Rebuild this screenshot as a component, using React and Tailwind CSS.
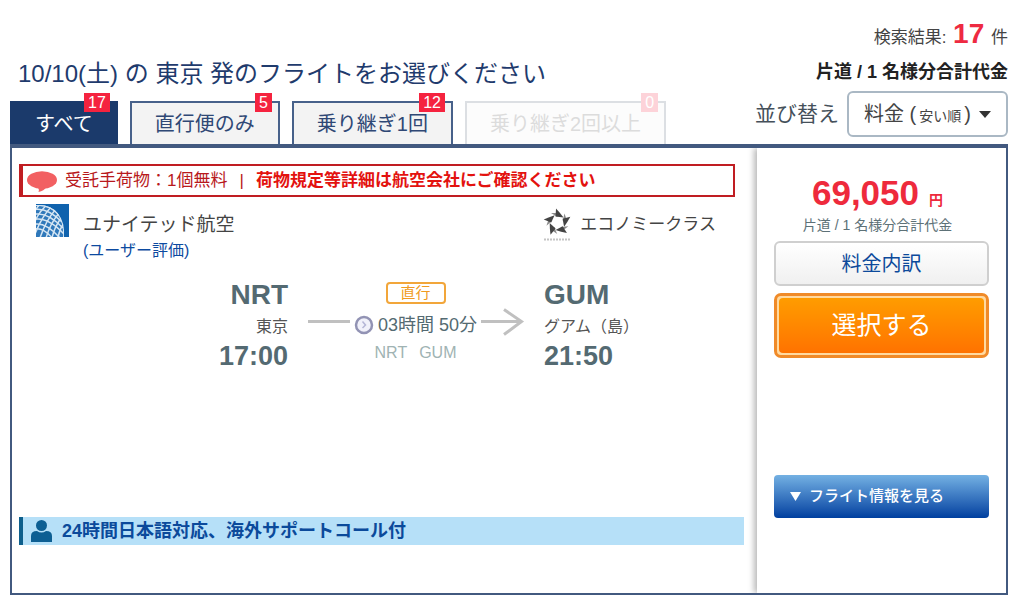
const tabs = [
  { label: 'すべて', count: 17, state: 'active' },
  { label: '直行便のみ', count: 5, state: 'normal' },
  { label: '乗り継ぎ1回', count: 12, state: 'normal' },
  { label: '乗り継ぎ2回以上', count: 0, state: 'disabled' },
];

const tabStyles = {
  active: 'border-[#1b3a6b] bg-[#1b3a6b] text-white',
  normal: 'border-[#47618a] bg-[#f3f3f3] text-[#2f4875]',
  disabled: 'border-[#dcdfe3] bg-[#fcfcfc] text-[#dcdcdc]',
};

function Tab({ label, count, state }) {
  return (
    <button
      type="button"
      role="tab"
      aria-selected={state === 'active'}
      disabled={state === 'disabled'}
      className={`relative h-[43px] border-2 border-b-0 px-[23px] text-[20px] leading-[40px] whitespace-nowrap ${tabStyles[state]}`}
    >
      {label}
      <span
        className={`absolute -top-[10px] right-[6px] px-[4px] text-[16px] leading-[19px] ${
          state === 'disabled' ? 'bg-[#fdd3d9] text-white' : 'bg-[#f5233f] text-white'
        }`}
      >
        {count}
      </span>
    </button>
  );
}

function SpeechBubble() {
  return (
    <svg width="30" height="22" viewBox="0 0 30 22" aria-hidden="true">
      <ellipse cx="15" cy="10" rx="15" ry="8.800" fill="#f26062" />
      <path d="M9 17 Q13 18 11.500 22 Q17 21 19.500 17 Z" fill="#f26062" />
    </svg>
  );
}

function AirlineLogo() {
  return (
    <svg width="33" height="33" viewBox="0 0 33 33" aria-hidden="true">
      <defs>
        <clipPath id="globe">
          <path d="M0 1 Q14 0 21.500 9 Q29 18 28 33 H0 Z" />
        </clipPath>
      </defs>
      <rect width="33" height="33" fill="#0f62ad" />
      <g clipPath="url(#globe)" fill="none" stroke="#d4e5f3" strokeWidth="1.500">
        <rect width="33" height="33" fill="#2f78ba" stroke="none" />
        <path d="M-4 6 Q10 2 26 18 M-4 11 Q10 6 27 24 M-4 16 Q10 11 28 30 M-4 21 Q8 16 24 34 M-4 26 Q6 21 18 36 M-4 2 Q12 -2 24 12" />
        <path d="M6 -2 Q-2 6 -4 14 M12 0 Q2 8 -3 22 M16 2 Q6 12 -1 30 M20 5 Q10 16 4 34 M23 9 Q14 20 10 34 M25 14 Q18 24 16 34 M28 19 Q23 26 22 34" />
        <path d="M0 1 Q14 0 21.500 9 Q29 18 28 33" strokeWidth="2" />
      </g>
    </svg>
  );
}

function AllianceLogo() {
  return (
    <svg width="30" height="36" viewBox="0 0 30 36" aria-hidden="true">
      <g transform="translate(14.500 15.500)">
        {[0, 72, 144, 216, 288].map((angle) => (
          <g key={angle} transform={`rotate(${angle})`}>
            <path d="M-6.500 -9.500 L0 -9.500 L0 -5.500 Z" fill="#8a8a8a" />
            <path d="M-1.500 -14 L2.500 -9.500 L6 -5 L-2 -6 Z" fill="#444" />
          </g>
        ))}
      </g>
      <path d="M1 32.500 H28" stroke="#c4c4c4" strokeWidth="2" strokeDasharray="2 1" />
    </svg>
  );
}

function ClockIcon() {
  return (
    <svg width="20" height="20" viewBox="0 0 20 20" aria-hidden="true">
      <circle cx="10" cy="10" r="8" fill="#f1f1fa" stroke="#9293b4" strokeWidth="2.500" />
      <path d="M8.500 6.500 L11.500 10 L8.500 13" fill="none" stroke="#b5b6d6" strokeWidth="1.500" />
    </svg>
  );
}

function PersonIcon() {
  return (
    <svg width="21" height="23" viewBox="0 0 21 23" aria-hidden="true" fill="#0d5f93">
      <ellipse cx="10.500" cy="5.500" rx="5.500" ry="5.500" />
      <path d="M0 22 V16 Q0 11 6 11 Q10.500 14 15 11 Q21 11 21 16 V22 Z" />
    </svg>
  );
}

function Header() {
  return (
    <header className="flex items-end justify-between">
      <div>
        <h1 className="mb-[10px] ml-2 text-[24px] leading-[34px] text-[#1f3b6d]">
          10/10(土) の 東京 発のフライトをお選びください
        </h1>
        <div role="tablist" className="flex gap-3">
          {tabs.map((tab) => (
            <Tab key={tab.label} {...tab} />
          ))}
        </div>
      </div>
      <div className="flex flex-col items-end pb-[7px]">
        <p className="text-[17px] leading-[36px]">
          検索結果: <strong className="mx-[2px] text-[28px] text-[#ee2a41]">17</strong> 件
        </p>
        <p className="text-[18px] leading-[32px] font-bold text-[#222]">片道 / 1 名様分合計代金</p>
        <div className="mt-[3px] flex items-center gap-2">
          <label htmlFor="sort" className="text-[21px] text-[#45505a]">
            並び替え
          </label>
          <div className="grid w-[161px] items-center">
            <select
              id="sort"
              className="col-start-1 row-start-1 h-[46px] w-full appearance-none rounded-[6px] border-2 border-[#aab8c4] bg-white px-4 text-[14px] text-transparent"
            >
              <option className="text-black">料金 ( 安い順 )</option>
            </select>
            <span
              aria-hidden="true"
              className="pointer-events-none col-start-1 row-start-1 flex items-center justify-between px-[17px] text-[20px]"
            >
              <span className="whitespace-nowrap">
                料金 (<span className="mx-[3px] text-[14px]">安い順</span>)
              </span>
              <svg width="12" height="7" viewBox="0 0 12 7" fill="#333">
                <path d="M0 0 H12 L6 7 Z" />
              </svg>
            </span>
          </div>
        </div>
      </div>
    </header>
  );
}

function Route() {
  return (
    <div className="mt-4 flex text-[#546a72]">
      <div className="w-[269px] text-right">
        <p className="text-[28px] leading-[32px] font-bold">NRT</p>
        <p className="text-[16px] leading-[32px] text-[#555]">東京</p>
        <p className="text-[27px] leading-[26px] font-bold">17:00</p>
      </div>
      <div className="ml-5 flex flex-col items-center">
        <span className="mt-[3px] rounded-[4px] border-2 border-[#f2a63a] px-[13px] text-[15px] leading-[18px] text-[#f09a20]">
          直行
        </span>
        <div className="mt-[7px] flex items-center">
          <svg width="42" height="28" viewBox="0 0 42 28" aria-hidden="true">
            <path d="M0 10.500 H42" stroke="#c0c0c0" strokeWidth="3" />
          </svg>
          <span className="mx-[4px] flex items-center gap-1 text-[18px] leading-[28px] whitespace-nowrap">
            <ClockIcon />
            03時間 50分
          </span>
          <svg
            width="42"
            height="28"
            viewBox="0 0 42 28"
            aria-hidden="true"
            fill="none"
            stroke="#c0c0c0"
            strokeWidth="3"
            className="overflow-visible"
          >
            <path d="M0 10.500 H41 M23 -1.500 L40.500 10.500 L23 23.500" />
          </svg>
        </div>
        <p className="flex gap-3 text-[16px] leading-[28px] text-[#a0b3b3]">
          <span>NRT</span>
          <span>GUM</span>
        </p>
      </div>
      <div className="ml-[21px]">
        <p className="text-[28px] leading-[32px] font-bold">GUM</p>
        <p className="text-[16px] leading-[32px] text-[#555]">グアム（島）</p>
        <p className="text-[27px] leading-[26px] font-bold">21:50</p>
      </div>
    </div>
  );
}

function Details() {
  return (
    <section className="min-w-0 flex-1 pt-4 pr-[13px] pb-12 pl-[7px]">
      <p className="mr-[9px] flex items-center border-2 border-l-4 border-[#c01d22] pl-1 text-[17px] leading-[29px] whitespace-nowrap text-[#b8191c]">
        <SpeechBubble />
        <span className="ml-2">受託手荷物：1個無料</span>
        <span className="ml-3">|</span>
        <strong className="ml-3 text-[#e3120f]">荷物規定等詳細は航空会社にご確認ください</strong>
      </p>
      <div className="mt-[7px] mr-[28px] flex items-start pl-[17px]">
        <AirlineLogo />
        <div className="ml-[14px]">
          <p className="mt-[7px] text-[19px] leading-[28px]">ユナイテッド航空</p>
          <a href="#review" className="block text-[16px] leading-[24px] text-[#0c4aa0]">
            (ユーザー評価)
          </a>
        </div>
        <div className="mt-[3px] ml-auto flex items-center gap-[7px]">
          <AllianceLogo />
          <p className="text-[17px]">エコノミークラス</p>
        </div>
      </div>
      <Route />
      <p className="mt-[148px] flex items-center gap-[10px] border-l-4 border-[#0d5f8c] bg-[#b6e0f8] pl-2 text-[18px] leading-[28px] font-bold text-[#0b4a9b]">
        <PersonIcon />
        24時間日本語対応、海外サポートコール付
      </p>
    </section>
  );
}

function Purchase() {
  return (
    <aside className="flex w-[249px] shrink-0 flex-col bg-white px-[17px] pt-[28px] shadow-[-3px_0_6px_rgba(0,0,0,0.28)]">
      <div className="pr-2 text-center">
        <p className="flex items-baseline justify-center gap-[10px] text-[35px] leading-[34px] font-bold text-[#ee2a3c]">
          69,050 <span className="text-[14px] leading-[14px]">円</span>
        </p>
        <p className="mt-1 text-[14px] leading-[22px] text-[#5d7177]">片道 / 1 名様分合計代金</p>
      </div>
      <button
        type="button"
        className="mt-[5px] h-[45px] rounded-[6px] border-2 border-[#cfcfcf] bg-linear-to-b from-white to-[#f0f0f0] text-[20px] text-[#0c4a9b]"
      >
        料金内訳
      </button>
      <button
        type="button"
        className="mt-[7px] h-[65px] rounded-[7px] border-[3px] border-[#f08a28] bg-[#ffd9a0] p-[2px]"
      >
        <span className="flex h-full items-center justify-center rounded-[4px] bg-linear-to-b from-[#ff9c00] to-[#ff7200] text-[25px] text-white">
          選択する
        </span>
      </button>
      <button
        type="button"
        className="mt-[117px] flex h-[43px] items-center gap-2 rounded-[4px] bg-linear-to-b from-[#74b1e3] to-[#003f9f] pl-4 text-[15px] font-medium text-white"
      >
        <svg width="11" height="9" viewBox="0 0 11 9" fill="white" aria-hidden="true">
          <path d="M0 0 H11 L5.500 9 Z" />
        </svg>
        フライト情報を見る
      </button>
    </aside>
  );
}

export default function App() {
  return (
    <div className="bg-white px-[10px] pt-4 pr-4 pb-[9px] font-['Liberation_Sans','Noto_Sans_CJK_JP',sans-serif] text-[#444]">
      <Header />
      <main className="flex overflow-hidden border-2 border-t-4 border-[#42597f]">
        <Details />
        <Purchase />
      </main>
    </div>
  );
}
